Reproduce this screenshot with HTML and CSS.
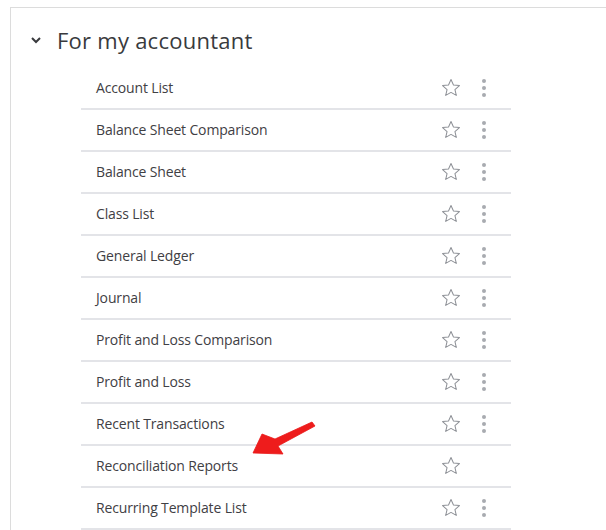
FILE: index.html
```html
<!DOCTYPE html>
<html>
<head>
<meta charset="utf-8">
<link rel="stylesheet" href="styles.css">
</head>
<body>
<div class="card">
  <div class="header">
    <svg class="chevron" width="12" height="8" viewBox="0 0 12 8"><path d="M2 2 L6 6 L10 2" fill="none" stroke="#393a3d" stroke-width="2"/></svg>
    <span class="title">For my accountant</span>
  </div>
  <ul class="list">
    <li class="row"><span class="name">Account List</span><span class="acts"><svg class="star" viewBox="0 0 24 24"><path d="M12 2.8l2.7 6 6.5.6-4.9 4.3 1.5 6.4L12 16.8l-5.8 3.3 1.5-6.4-4.9-4.3 6.5-.6z"/></svg><span class="more"><i></i><i></i><i></i></span></span></li>
    <li class="row"><span class="name">Balance Sheet Comparison</span><span class="acts"><svg class="star" viewBox="0 0 24 24"><path d="M12 2.8l2.7 6 6.5.6-4.9 4.3 1.5 6.4L12 16.8l-5.8 3.3 1.5-6.4-4.9-4.3 6.5-.6z"/></svg><span class="more"><i></i><i></i><i></i></span></span></li>
    <li class="row"><span class="name">Balance Sheet</span><span class="acts"><svg class="star" viewBox="0 0 24 24"><path d="M12 2.8l2.7 6 6.5.6-4.9 4.3 1.5 6.4L12 16.8l-5.8 3.3 1.5-6.4-4.9-4.3 6.5-.6z"/></svg><span class="more"><i></i><i></i><i></i></span></span></li>
    <li class="row"><span class="name">Class List</span><span class="acts"><svg class="star" viewBox="0 0 24 24"><path d="M12 2.8l2.7 6 6.5.6-4.9 4.3 1.5 6.4L12 16.8l-5.8 3.3 1.5-6.4-4.9-4.3 6.5-.6z"/></svg><span class="more"><i></i><i></i><i></i></span></span></li>
    <li class="row"><span class="name">General Ledger</span><span class="acts"><svg class="star" viewBox="0 0 24 24"><path d="M12 2.8l2.7 6 6.5.6-4.9 4.3 1.5 6.4L12 16.8l-5.8 3.3 1.5-6.4-4.9-4.3 6.5-.6z"/></svg><span class="more"><i></i><i></i><i></i></span></span></li>
    <li class="row"><span class="name">Journal</span><span class="acts"><svg class="star" viewBox="0 0 24 24"><path d="M12 2.8l2.7 6 6.5.6-4.9 4.3 1.5 6.4L12 16.8l-5.8 3.3 1.5-6.4-4.9-4.3 6.5-.6z"/></svg><span class="more"><i></i><i></i><i></i></span></span></li>
    <li class="row"><span class="name">Profit and Loss Comparison</span><span class="acts"><svg class="star" viewBox="0 0 24 24"><path d="M12 2.8l2.7 6 6.5.6-4.9 4.3 1.5 6.4L12 16.8l-5.8 3.3 1.5-6.4-4.9-4.3 6.5-.6z"/></svg><span class="more"><i></i><i></i><i></i></span></span></li>
    <li class="row"><span class="name">Profit and Loss</span><span class="acts"><svg class="star" viewBox="0 0 24 24"><path d="M12 2.8l2.7 6 6.5.6-4.9 4.3 1.5 6.4L12 16.8l-5.8 3.3 1.5-6.4-4.9-4.3 6.5-.6z"/></svg><span class="more"><i></i><i></i><i></i></span></span></li>
    <li class="row"><span class="name">Recent Transactions</span><span class="acts"><svg class="star" viewBox="0 0 24 24"><path d="M12 2.8l2.7 6 6.5.6-4.9 4.3 1.5 6.4L12 16.8l-5.8 3.3 1.5-6.4-4.9-4.3 6.5-.6z"/></svg><span class="more"><i></i><i></i><i></i></span></span></li>
    <li class="row"><span class="name">Reconciliation Reports</span><span class="acts"><svg class="star" viewBox="0 0 24 24"><path d="M12 2.8l2.7 6 6.5.6-4.9 4.3 1.5 6.4L12 16.8l-5.8 3.3 1.5-6.4-4.9-4.3 6.5-.6z"/></svg><span class="more hidden"><i></i><i></i><i></i></span></span></li>
    <li class="row"><span class="name">Recurring Template List</span><span class="acts"><svg class="star" viewBox="0 0 24 24"><path d="M12 2.8l2.7 6 6.5.6-4.9 4.3 1.5 6.4L12 16.8l-5.8 3.3 1.5-6.4-4.9-4.3 6.5-.6z"/></svg><span class="more"><i></i><i></i><i></i></span></span></li>
  </ul>
</div>
<svg class="arrow" width="72" height="42" viewBox="0 0 72 42">
  <path d="M64 4 L27 21 L14 16 L5 35 L35 36 L30 28 L67 8 Z" fill="#ee1c1c" stroke="#e81818" stroke-width="0.8" stroke-linejoin="round"/>
</svg>
</body>
</html>
```
FILE: styles.css
```css
html, body { margin: 0; padding: 0; background: #fff; }
body {
  font-family: "Open Sans", "Noto Sans", sans-serif;
  color: #393a3d;
  position: relative;
  width: 606px;
  height: 530px;
  overflow: hidden;
}
.card {
  margin: 7px 0 0 10px;
  border-top: 1px solid #dcdcdc;
  border-left: 1px solid #dcdcdc;
  width: 700px;
  min-height: 600px;
}
.header {
  display: flex;
  align-items: center;
  height: 57px;
  padding-top: 3px;
  padding-left: 19px;
}
.chevron { margin-right: 15px; margin-top: 1px; }
.title { font-size: 22px; color: #393a3d; letter-spacing: 0.25px; }
.list {
  list-style: none;
  margin: 0;
  padding: 0 0 0 70px;
  width: 430px;
}
.row {
  display: flex;
  align-items: center;
  justify-content: space-between;
  height: 40px;
  border-bottom: 2px solid #e3e4e8;
  padding-left: 15px;
  font-size: 14px;
}
.name { color: #3f4044; letter-spacing: -0.15px; margin-top: -2px; }
.acts { display: flex; align-items: center; padding-right: 25px; }
.star {
  width: 22px; height: 22px;
  fill: none; stroke: #8d9096; stroke-width: 1.1; stroke-linejoin: round;
}
.more {
  display: flex; flex-direction: column; gap: 3px;
  margin-left: 20px; width: 4px;
}
.more i { display: block; width: 4px; height: 4px; border-radius: 50%; background: #a8abb0; }
.more.hidden { visibility: hidden; }
.arrow { position: absolute; left: 248px; top: 418px; }
```
